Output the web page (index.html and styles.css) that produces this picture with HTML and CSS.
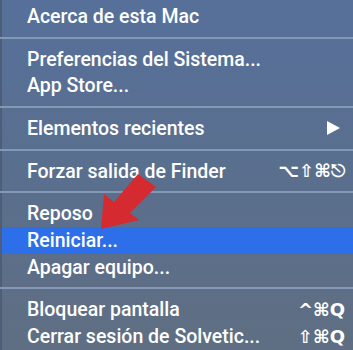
FILE: index.html
```html
<!DOCTYPE html>
<html lang="es">
<head>
<meta charset="utf-8">
<link rel="stylesheet" href="styles.css">
</head>
<body>
<div class="menu">
  <div class="item"><span class="label">Acerca de esta Mac</span></div>
  <div class="sep"></div>
  <div class="item"><span class="label">Preferencias del Sistema...</span></div>
  <div class="item"><span class="label">App Store...</span></div>
  <div class="sep"></div>
  <div class="item"><span class="label">Elementos recientes</span><span class="tri"></span></div>
  <div class="sep"></div>
  <div class="item"><span class="label">Forzar salida de Finder</span><span class="keys">⌥⇧⌘⎋</span></div>
  <div class="sep"></div>
  <div class="item"><span class="label">Reposo</span></div>
  <div class="item active"><span class="label">Reiniciar...</span></div>
  <div class="item"><span class="label">Apagar equipo...</span></div>
  <div class="sep"></div>
  <div class="item"><span class="label">Bloquear pantalla</span><span class="keys">^⌘Q</span></div>
  <div class="item"><span class="label">Cerrar sesión de Solvetic...</span><span class="keys">⇧⌘Q</span></div>
  <svg class="arrow" width="353" height="350" viewBox="0 0 353 350">
    <polygon points="101,229 104,194 114,202 138,174 156,187 130,213 139,220" fill="#d52a30"/>
  </svg>
</div>
</body>
</html>
```
FILE: styles.css
```css
html, body {
  margin: 0;
  padding: 0;
}
body {
  width: 353px;
  height: 350px;
  overflow: hidden;
  background: #5a6f8c;
}
.menu {
  position: relative;
  width: 353px;
  height: 350px;
  box-sizing: border-box;
  padding-top: 3px;
  display: flex;
  flex-direction: column;
  background: linear-gradient(180deg, #56709a 0%, #5a6f8e 50%, #5f6e82 100%);
  border-left: 2px solid #4d5f78;
  font-family: Roboto, "Liberation Sans", sans-serif;
  font-weight: 500;
  font-size: 19.5px;
  color: #ffffff;
}
.item {
  height: 27px;
  display: flex;
  align-items: center;
  justify-content: space-between;
  padding: 0 8px 0 25px;
}
.item.active {
  background: #2c6fe8;
}
.sep {
  height: 16px;
  display: flex;
  align-items: center;
  margin-left: -2px;
}
.sep::before {
  content: "";
  display: block;
  width: 100%;
  height: 2px;
  background: #8398b4;
}
.keys {
  font-family: "DejaVu Sans", sans-serif;
  font-weight: bold;
  font-size: 18px;
}
.tri {
  width: 0;
  height: 0;
  border-top: 7px solid transparent;
  border-bottom: 7px solid transparent;
  border-left: 13px solid #ffffff;
  margin-right: 5px;
}
.arrow {
  position: absolute;
  left: -2px;
  top: 0;
  pointer-events: none;
}
```
